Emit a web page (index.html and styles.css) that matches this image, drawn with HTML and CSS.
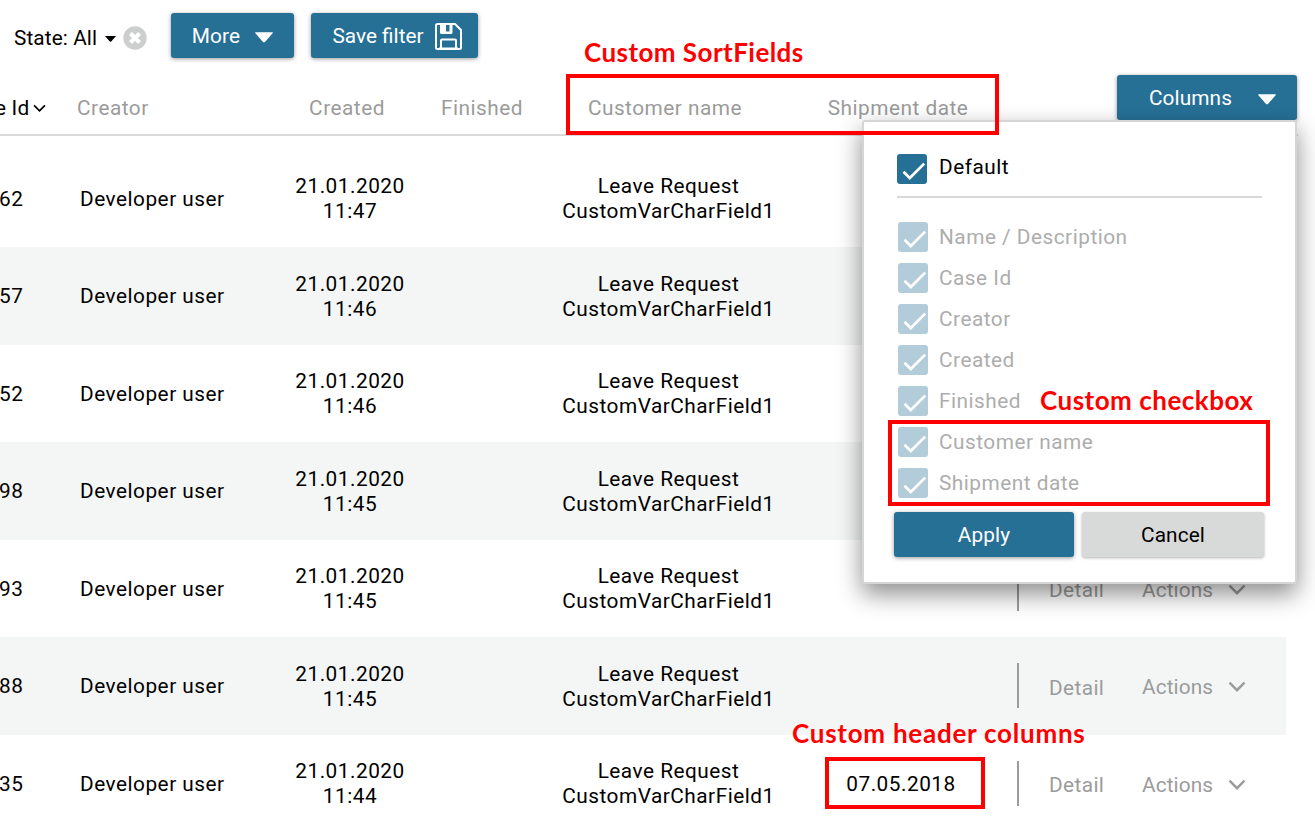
FILE: index.html
```
<!DOCTYPE html>
<html lang="en">
<head>
<meta charset="utf-8">
<title>Cases</title>
<link rel="stylesheet" href="styles.css">
</head>
<body>
<svg class="defs" width="0" height="0">
  <symbol id="check" viewBox="0 0 30 30"><path d="M6.500 17.800 12.800 24 27.200 9.600" fill="none" stroke="#fff" stroke-width="2.700"/></symbol>
  <symbol id="chev" viewBox="0 0 18 12"><path d="M1.500 1.700 9 9.200 16.500 1.700" fill="none" stroke="currentColor" stroke-width="2.400"/></symbol>
  <symbol id="caret" viewBox="0 0 18 11"><path d="M0 .8Q0 .3.8.3H17.200Q18 .3 18 .8L10.200 9.700Q9 10.700 7.800 9.700Z" fill="currentColor"/></symbol>
</svg>
<main class="page">
  <div class="toolbar">
    <span class="state">State: All</span>
    <svg class="small-caret" viewBox="0 0 11 6"><path d="M0 0H11L6.200 5.400Q5.500 6 4.800 5.400Z"/></svg>
    <svg class="clear" viewBox="0 0 24 24"><circle cx="12" cy="12" r="11.700" fill="#cdcfcf"/><path d="M7.500 7.500 16.500 16.500M16.500 7.500 7.500 16.500" stroke="#fff" stroke-width="4"/></svg>
    <button class="btn more"><span>More</span><svg class="caret"><use href="#caret"/></svg></button>
    <button class="btn save"><span>Save filter</span><svg class="disk" viewBox="0 0 27 27" fill="none" stroke="#fff" stroke-width="2"><path d="M2.500 1H20L26 7V24.500Q26 26 24.500 26H2.500Q1 26 1 24.500V2.500Q1 1 2.500 1Z"/><path d="M5 1V9.500Q5 11 6.500 11H16Q17.500 11 17.500 9.500V1H14.500V8.500H11V1Z" fill="#fff" stroke="none"/><path d="M6 26V17.500Q6 16.500 7 16.500H20Q21 16.500 21 17.500V26M4 25.500H23"/></svg></button>
  </div>
  <div class="head cols">
    <span class="sorted">e Id<svg class="sort"><use href="#chev"/></svg></span>
    <span>Creator</span><span class="mid">Created</span><span class="fin">Finished</span><span class="mid">Customer name</span><span class="mid">Shipment date</span>
    <div class="picker">
      <button class="btn columns"><span>Columns</span><svg class="caret"><use href="#caret"/></svg></button>
      <section class="panel">
        <label class="opt default"><span class="box"><svg><use href="#check"/></svg></span>Default</label>
        <div class="options">
          <label class="opt"><span class="box"><svg><use href="#check"/></svg></span>Name / Description</label>
          <label class="opt"><span class="box"><svg><use href="#check"/></svg></span>Case Id</label>
          <label class="opt"><span class="box"><svg><use href="#check"/></svg></span>Creator</label>
          <label class="opt"><span class="box"><svg><use href="#check"/></svg></span>Created</label>
          <label class="opt"><span class="box"><svg><use href="#check"/></svg></span>Finished</label>
          <label class="opt"><span class="box"><svg><use href="#check"/></svg></span>Customer name</label>
          <label class="opt"><span class="box"><svg><use href="#check"/></svg></span>Shipment date</label>
        </div>
        <div class="buttons"><button class="btn"><span>Apply</span></button><button class="btn cancel"><span>Cancel</span></button></div>
      </section>
    </div>
  </div>
  <div class="rows">
    <div class="row cols"><span class="id">62</span><span>Developer user</span><span class="mid">21.01.2020<br>11:47</span><span></span><span class="mid name">Leave Request<br>CustomVarCharField1</span><span></span></div>
    <div class="row cols"><span class="id">57</span><span>Developer user</span><span class="mid">21.01.2020<br>11:46</span><span></span><span class="mid name">Leave Request<br>CustomVarCharField1</span><span></span></div>
    <div class="row cols"><span class="id">52</span><span>Developer user</span><span class="mid">21.01.2020<br>11:46</span><span></span><span class="mid name">Leave Request<br>CustomVarCharField1</span><span></span></div>
    <div class="row cols"><span class="id">98</span><span>Developer user</span><span class="mid">21.01.2020<br>11:45</span><span></span><span class="mid name">Leave Request<br>CustomVarCharField1</span><span></span></div>
    <div class="row cols"><span class="id">93</span><span>Developer user</span><span class="mid">21.01.2020<br>11:45</span><span></span><span class="mid name">Leave Request<br>CustomVarCharField1</span><span></span><div class="acts"><span class="detail">Detail</span><span class="actions">Actions</span><svg class="chev"><use href="#chev"/></svg></div></div>
    <div class="row cols"><span class="id">88</span><span>Developer user</span><span class="mid">21.01.2020<br>11:45</span><span></span><span class="mid name">Leave Request<br>CustomVarCharField1</span><span></span><div class="acts"><span class="detail">Detail</span><span class="actions">Actions</span><svg class="chev"><use href="#chev"/></svg></div></div>
    <div class="row cols"><span class="id">35</span><span>Developer user</span><span class="mid">21.01.2020<br>11:44</span><span></span><span class="mid name">Leave Request<br>CustomVarCharField1</span><span class="mid">07.05.2018</span><div class="acts"><span class="detail">Detail</span><span class="actions">Actions</span><svg class="chev"><use href="#chev"/></svg></div></div>
  </div>
  <div class="mark mark-sort"></div><div class="note note-sort">Custom SortFields</div>
  <div class="mark mark-check"></div><div class="note note-check">Custom checkbox</div>
  <div class="mark mark-date"></div><div class="note note-date">Custom header columns</div>
</main>
</body>
</html>
```
FILE: styles.css
```
* { box-sizing: border-box; }
body { margin: 0; background: #fff; }
.defs { position: absolute; }
.page { position: relative; width: 1315px; height: 830px; overflow: hidden; font: 20.8px/25px Roboto, sans-serif; letter-spacing: .5px; color: #000; }
svg { display: block; flex: none; }
.toolbar { display: flex; height: 75px; padding: 13px 0 0 14px; align-items: flex-start; }
.state { width: 91px; margin-top: 13px; letter-spacing: .1px; white-space: nowrap; }
.small-caret { width: 11px; height: 6px; margin-top: 23px; }
.clear { width: 24px; height: 24px; margin: 13px 24px 0 7px; }
.btn { display: flex; align-items: center; justify-content: center; height: 45px; padding: 0; border: 0; border-radius: 3px; background: #267096; color: #fff; font: 20.8px/25px Roboto, sans-serif; letter-spacing: .1px; box-shadow: 0 1px 4px rgba(0,0,0,.4); white-space: nowrap; }
.btn span { padding-top: 2px; }
.caret { width: 18px; height: 11px; margin-top: 3px; }
.more { width: 123px; margin-right: 17px; gap: 15px; }
.save { width: 167px; gap: 11px; letter-spacing: 0; padding-left: 5px; }
.disk { width: 27px; height: 27px; margin-top: 1px; }
.cols { display: grid; grid-template-columns: 80px 180px 180px 108px 240px 226px 1fr; align-items: center; }
.mid { text-align: center; }
.head { height: 61px; border-bottom: 2px solid #d9d9d9; width: 1298px; color: #9b9b9b; position: relative; }
.head > span { position: relative; left: -3px; top: 4px; }
.head .fin { left: 1px; }
.head .sorted { left: -5px; display: flex; align-items: center; color: #000; letter-spacing: .2px; }
.sort { width: 13px; height: 9px; margin-left: 4px; }
.picker { position: absolute; z-index: 2; right: 1px; top: 0; width: 435px; }
.columns { width: 180px; margin-left: auto; gap: 26px; padding-left: 11px; }
.panel { position: relative; height: 464px; border: 2px solid #d5d5d5; border-radius: 3px; background: #fff; padding: 32px 31px 0 33px; box-shadow: 0 10px 25px rgba(0,0,0,.45); }
.opt { display: flex; align-items: flex-start; gap: 11px; height: 41px; }
.box { width: 30px; height: 30px; border-radius: 3px; background: #b3ccda; }
.box svg { width: 30px; height: 30px; }
.default { height: 44px; border-bottom: 2px solid #d9d9d9; color: #000; gap: 12px; width: 365px; line-height: 27px; }
.default .box { background: #267096; }
.options { padding: 24px 0 0 1px; color: #adadad; }
.options .opt { line-height: 30px; }
.buttons { display: flex; gap: 8px; margin: 3px 0 0 -3px; }
.buttons .btn { width: 180px; }
.buttons .cancel { width: 182px; background: #d8dada; color: #000; box-shadow: 0 1px 3px rgba(0,0,0,.3); }
.rows { width: 1286px; margin-top: 13.6px; }
.row { height: 97.55px; padding-top: 1.4px; }
.row:nth-child(even) { background: #f3f6f5; }
.id { margin-left: -1px; }
.name { padding-left: 1px; }
.acts { display: flex; align-items: center; height: 45px; margin: -2px 0 0 3px; border-left: 2px solid #9b9b9b; color: #9b9b9b; padding-left: 30px; letter-spacing: .4px; }
.detail { width: 93px; padding-top: 5px; }
.actions { width: 86px; padding-top: 4px; letter-spacing: .1px; }
.chev { width: 18px; height: 12px; margin-top: 3px; }
.mark { position: absolute; z-index: 3; border: 4px solid #f00; }
.mark-sort { left: 566px; top: 74px; width: 433px; height: 61px; }
.mark-check { left: 888px; top: 420px; width: 382px; height: 86px; }
.mark-date { left: 825px; top: 757px; width: 160px; height: 52px; }
.note { position: absolute; z-index: 3; color: #f00; font: bold 26px/30px Lato, sans-serif; white-space: nowrap; }
.note-sort { left: 584px; top: 37px; letter-spacing: .45px; }
.note-check { left: 1040px; top: 385px; letter-spacing: .5px; }
.note-date { left: 792px; top: 718px; letter-spacing: .75px; }
```
